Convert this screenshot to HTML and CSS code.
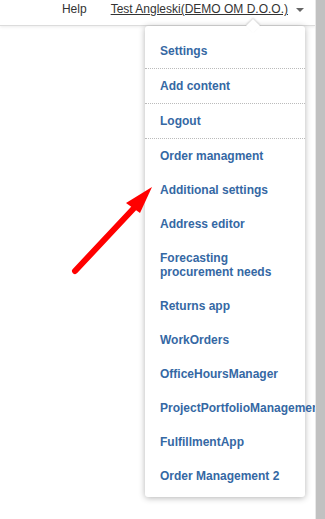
FILE: index.html
```html
<!DOCTYPE html>
<html lang="en">
<head>
  <meta charset="UTF-8" />
  <meta name="viewport" content="width=device-width, initial-scale=1.0" />
  <title>User menu</title>
  <link rel="stylesheet" href="styles.css">
</head>
<body>
  <div class="page">
    <main class="main">
      <header class="topbar">
        <a class="top-link" href="#">Help</a>
        <a class="top-link user-link" href="#">Test Angleski(DEMO OM D.O.O.)</a>
        <span class="caret"></span>
      </header>

      <ul class="user-menu">
        <li class="sep"><a href="#">Settings</a></li>
        <li class="sep"><a href="#">Add content</a></li>
        <li class="sep"><a href="#">Logout</a></li>
        <li><a href="#">Order managment</a></li>
        <li><a href="#">Additional settings</a></li>
        <li><a href="#">Address editor</a></li>
        <li><a href="#">Forecasting procurement needs</a></li>
        <li><a href="#">Returns app</a></li>
        <li><a href="#">WorkOrders</a></li>
        <li><a href="#">OfficeHoursManager</a></li>
        <li><a href="#">ProjectPortfolioManagement</a></li>
        <li><a href="#">FulfillmentApp</a></li>
        <li><a href="#">Order Management 2</a></li>
      </ul>

      <svg class="pointer" width="100" height="100" viewBox="0 0 100 100">
        <line x1="15" y1="91" x2="75" y2="27" stroke="#ff0000" stroke-width="6" stroke-linecap="round" />
        <polygon points="92,7 66,23 80,33" fill="#ff0000" />
      </svg>
    </main>
    <div class="rail"></div>
  </div>
</body>
</html>
```

FILE: styles.css
```css
html, body {
  margin: 0;
  padding: 0;
}

body {
  font-family: "Liberation Sans", Arial, sans-serif;
  background-color: #ffffff;
  color: #333;
}

.page {
  display: flex;
  height: 519px;
  overflow: hidden;
}

.main {
  flex: 1;
  position: relative;
  overflow: hidden;
}

.rail {
  width: 9px;
  background-color: #c1c1c1;
  border-left: 1px solid #e8e8e8;
}

.topbar {
  height: 26px;
  box-sizing: border-box;
  padding: 2px 11px 0 0;
  display: flex;
  justify-content: flex-end;
  align-items: flex-start;
  border-bottom: 1px solid #dcdcdc;
  box-shadow: 0 1px 3px rgba(0, 0, 0, 0.08);
  font-size: 12px;
  line-height: 14px;
}

.top-link {
  color: #333;
  text-decoration: none;
  margin-left: 24px;
}

.user-link {
  text-decoration: underline;
}

.caret {
  width: 0;
  height: 0;
  margin: 6px 0 0 8px;
  border-left: 4px solid transparent;
  border-right: 4px solid transparent;
  border-top: 4px solid #666;
}

.user-menu {
  position: absolute;
  left: 145px;
  top: 26px;
  width: 160px;
  margin: 0;
  padding: 8px 0 4px;
  list-style: none;
  background-color: #fff;
  border-radius: 3px;
  box-shadow: 0 1px 6px rgba(0, 0, 0, 0.3);
  box-sizing: border-box;
}

.user-menu::before {
  content: "";
  position: absolute;
  left: 103px;
  top: -5px;
  width: 10px;
  height: 10px;
  background-color: #fff;
  transform: rotate(45deg);
  box-shadow: -1px -1px 2px rgba(0, 0, 0, 0.15);
}

.user-menu li {
  position: relative;
}

.user-menu li.sep {
  border-bottom: 1px dotted #bbb;
}

.user-menu a {
  display: block;
  padding: 10px 10px 10px 15px;
  font-size: 12px;
  font-weight: bold;
  line-height: 14px;
  color: #3568a4;
  text-decoration: none;
}

.pointer {
  position: absolute;
  left: 60px;
  top: 180px;
}
```
